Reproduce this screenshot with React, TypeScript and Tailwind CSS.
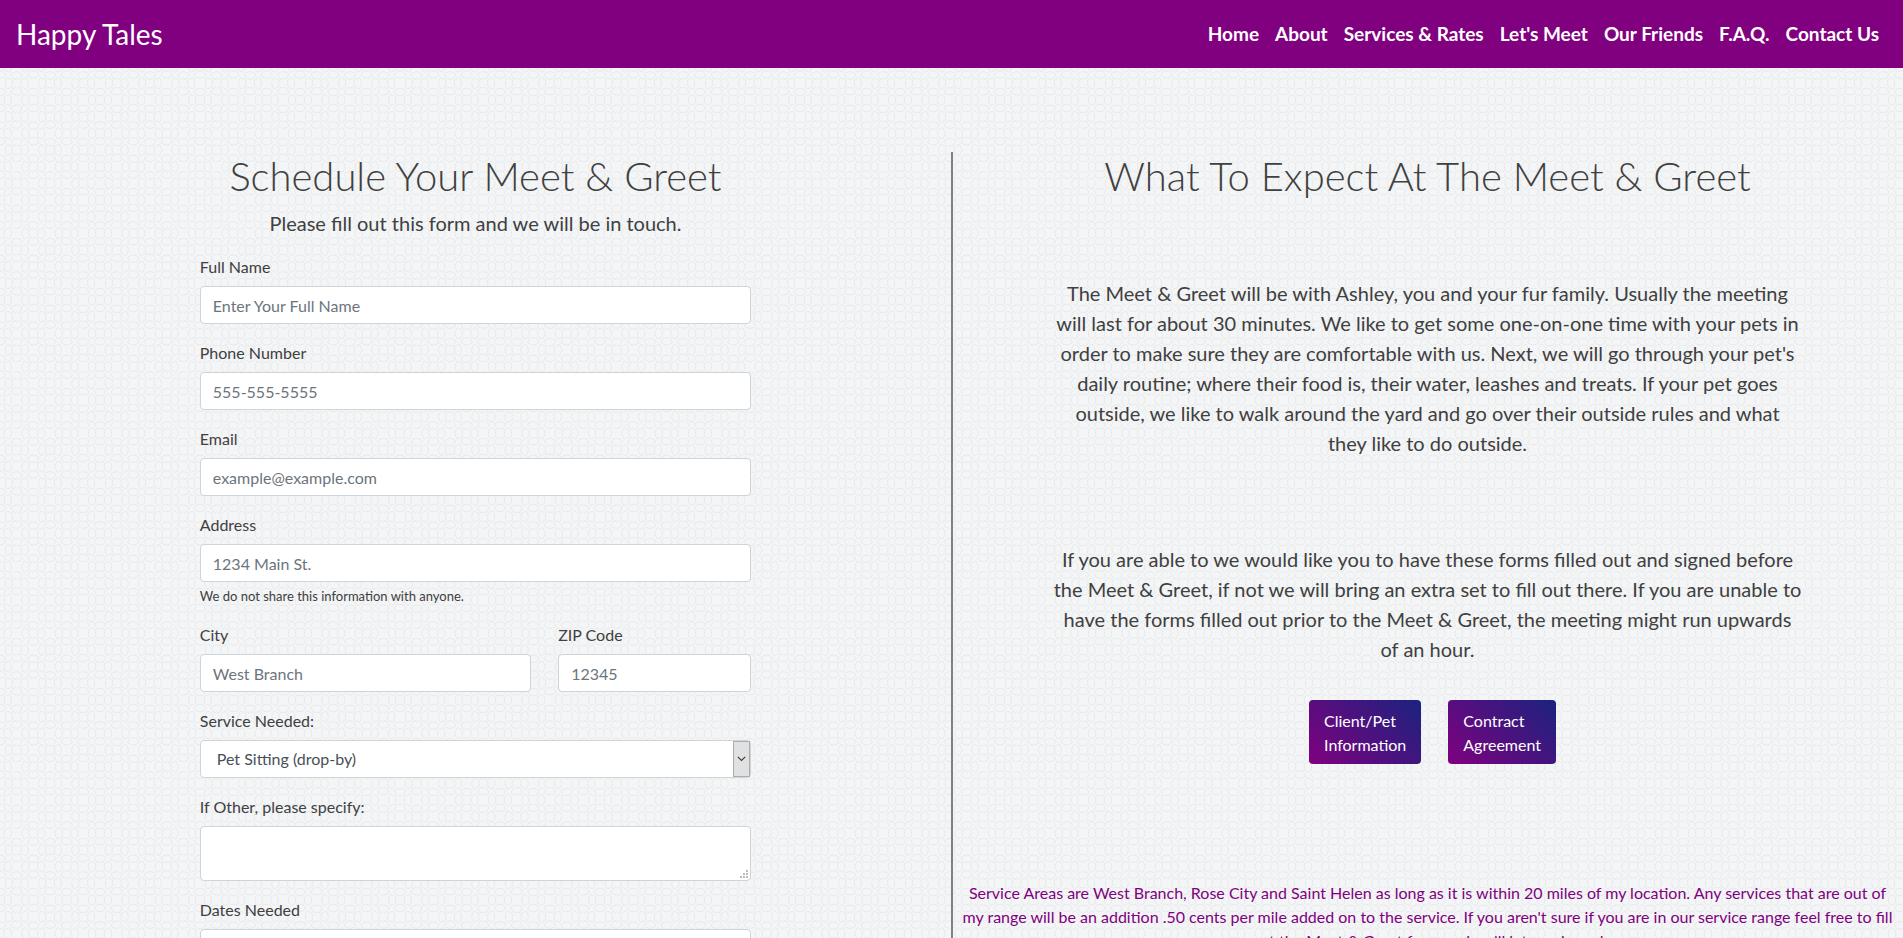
import type { ReactNode } from "react";

const navLinks = ["Home", "About", "Services & Rates", "Let's Meet", "Our Friends", "F.A.Q.", "Contact Us"];

const fieldClass =
  "block h-[38px] w-full rounded border border-[#ced4da] bg-white px-3 text-base text-[#495057] placeholder:text-[#6c757d] placeholder:opacity-100";

const flowers: [number, number][] = [];
for (let row = 0; row < 7; row++) {
  for (let col = 0; col < 4; col++) {
    flowers.push([col * 100 + (row % 2 ? 50 : 0), row * 50]);
  }
}

function PatternBackdrop() {
  return (
    <svg className="absolute inset-0 -z-10 h-full w-full" aria-hidden="true">
      <defs>
        <pattern id="petals" width="100" height="100" viewBox="0 0 300 300" patternUnits="userSpaceOnUse">
          <g fill="none" stroke="#e7e9e8" strokeWidth="3" strokeLinejoin="round">
            {flowers.map(([x, y]) => (
              <g key={`${x}-${y}`} transform={`translate(${x} ${y})`}>
                {[0, 90, 180, 270].map((turn) => (
                  <path key={turn} transform={`rotate(${turn})`} d="M-17 -28 Q0 -42 17 -28 Q15 -20 8 -12 Q0 -16 -8 -12 Q-15 -20 -17 -28Z" />
                ))}
              </g>
            ))}
          </g>
        </pattern>
      </defs>
      <rect width="100%" height="100%" fill="url(#petals)" />
    </svg>
  );
}

function Field({ id, label, className = "", children }: { id: string; label: string; className?: string; children: ReactNode }) {
  return (
    <div className={`mb-4 ${className}`}>
      <label htmlFor={id} className="mb-1.5 block leading-[26px]">
        {label}
      </label>
      {children}
    </div>
  );
}

export default function App() {
  return (
    <div className="relative isolate h-screen overflow-hidden bg-[#f4f5f7] font-['Lato',sans-serif] text-base leading-6 text-[#404040]">
      <PatternBackdrop />
      <header className="flex h-[68px] items-center justify-between bg-[purple] px-4 text-white">
        <a href="#home" className="text-[28px] leading-[42px]">
          Happy Tales
        </a>
        <nav className="flex gap-4 pr-2 text-[19px] font-bold">
          {navLinks.map((name) => (
            <a key={name} href="#nav">
              {name}
            </a>
          ))}
        </nav>
      </header>

      <main className="grid grid-cols-2 pt-[84px] pr-px">
        <section className="px-4">
          <h1 className="mb-2 text-center text-[40px] leading-[48px] font-light">Schedule Your Meet &amp; Greet</h1>
          <p className="mb-4 text-center text-xl leading-[30px]">Please fill out this form and we will be in touch.</p>
          <form className="mx-auto w-3/5">
            <Field id="name" label="Full Name">
              <input id="name" type="text" placeholder="Enter Your Full Name" className={fieldClass} />
            </Field>
            <Field id="phone" label="Phone Number">
              <input id="phone" type="tel" placeholder="555-555-5555" className={fieldClass} />
            </Field>
            <Field id="email" label="Email">
              <input id="email" type="email" placeholder="example@example.com" className={fieldClass} />
            </Field>
            <Field id="address" label="Address">
              <input id="address" type="text" placeholder="1234 Main St." className={fieldClass} />
              <small className="mt-1 block text-[13px] leading-5">We do not share this information with anyone.</small>
            </Field>
            <div className="flex justify-between">
              <Field id="city" label="City" className="w-3/5">
                <input id="city" type="text" placeholder="West Branch" className={fieldClass} />
              </Field>
              <Field id="zip" label="ZIP Code" className="w-[35%]">
                <input id="zip" type="text" placeholder="12345" className={fieldClass} />
              </Field>
            </div>
            <Field id="service" label="Service Needed:">
              <div className="relative">
                <select id="service" className="block h-[38px] w-full appearance-none rounded border border-[#ced4da] bg-white px-4 text-base text-[#495057]">
                  <option>Pet Sitting (drop-by)</option>
                </select>
                <span className="pointer-events-none absolute inset-y-px right-px flex w-[17px] items-center justify-center border border-[#adadad] bg-[#e1e1e1]">
                  <svg width="9" height="6" viewBox="0 0 9 6" fill="none" stroke="#404040" strokeWidth="1.2" aria-hidden="true">
                    <path d="M0.8 0.8 4.5 4.5 8.2 0.8" />
                  </svg>
                </span>
              </div>
            </Field>
            <Field id="other" label="If Other, please specify:">
              <div className="relative">
                <textarea id="other" className="block h-[55px] w-full resize-none rounded border border-[#ced4da] bg-white px-3 py-1.5 text-[#495057]" />
                <svg className="pointer-events-none absolute right-[3px] bottom-[3px]" width="8" height="8" viewBox="0 0 8 8" fill="#bcbcbc" aria-hidden="true">
                  <path d="M6 0h2v2H6zM3 3h2v2H3zM6 3h2v2H6zM0 6h2v2H0zM3 6h2v2H3zM6 6h2v2H6z" />
                </svg>
              </div>
            </Field>
            <Field id="dates" label="Dates Needed">
              <input id="dates" type="text" className={fieldClass} />
            </Field>
          </form>
        </section>

        <section className="border-l-2 border-[#808080] px-1 text-center">
          <h1 className="text-[40px] leading-[48px] font-light">What To Expect At The Meet &amp; Greet</h1>
          <div className="mx-auto w-4/5 pt-[78px] text-xl leading-[30px]">
            <p>
              The Meet &amp; Greet will be with Ashley, you and your fur family. Usually the meeting will last for about 30
              minutes. We like to get some one-on-one time with your pets in order to make sure they are comfortable with us.
              Next, we will go through your pet's daily routine; where their food is, their water, leashes and treats. If your
              pet goes outside, we like to walk around the yard and go over their outside rules and what they&nbsp;like to do
              outside.
            </p>
            <p className="pt-[86px]">
              If you are able to we would like you to have these forms filled out and signed before the Meet &amp; Greet, if
              not we will bring an extra set to fill out there. If you are unable to have the forms filled out prior to the
              Meet &amp; Greet, the meeting might run upwards of&nbsp;an&nbsp;hour.
            </p>
          </div>
          <div className="flex justify-center gap-[27px] pt-9 pl-2.5">
            <a href="#client" className="rounded bg-linear-[45deg,purple,#1a237e] px-[15px] pt-[9px] pb-[7px] text-left text-white">
              Client/Pet
              <br />
              Information
            </a>
            <a href="#contract" className="rounded bg-linear-[45deg,purple,#1a237e] px-[15px] pt-[9px] pb-[7px] text-left text-white">
              Contract
              <br />
              Agreement
            </a>
          </div>
          <p className="pt-[117px] text-[purple]">
            Service Areas are West Branch, Rose City and Saint Helen as long as it is within 20 miles of my location. Any
            services that are out of my range will be an addition .50 cents per mile added on to the service. If you aren't
            sure if you are in our service range feel free to fill out the Meet &amp; Greet form and we'll let you know!
          </p>
        </section>
      </main>
    </div>
  );
}
